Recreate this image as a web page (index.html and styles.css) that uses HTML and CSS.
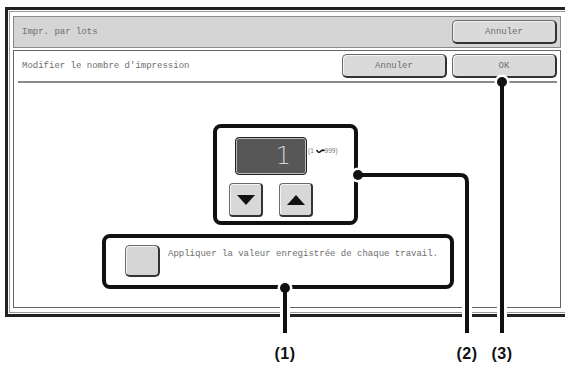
FILE: index.html
```html
<!DOCTYPE html>
<html lang="fr">
<head>
  <meta charset="UTF-8" />
  <meta name="viewport" content="width=device-width, initial-scale=1.0" />
  <title>Impr. par lots</title>
  <link rel="stylesheet" href="styles.css">
</head>
<body>
  <!-- Screen frame -->
  <div class="frame">
    <div class="frame-inner">
      <div class="header">
        <span class="label-text">Impr. par lots</span>
        <button class="btn">Annuler</button>
      </div>

      <div class="panel">
        <div class="panel-head">
          <span class="label-text">Modifier le nombre d'impression</span>
          <div class="actions">
            <button class="btn">Annuler</button>
            <button class="btn">OK</button>
          </div>
        </div>

        <div class="panel-body">
          <!-- Counter (2) -->
          <div class="callout counter">
            <div class="display-row">
              <div class="display">1</div>
              <span class="range">(1 <svg class="wave" width="9" height="5" viewBox="0 0 9 5"><path d="M1 1.5 Q2.5 4.5 4.5 2.5 T8 1.5" fill="none" stroke="#111" stroke-width="1.6" stroke-linecap="round"/></svg>999)</span>
            </div>
            <div class="arrows">
              <button class="arrow">
                <svg width="18" height="10" viewBox="0 0 18 10"><polygon points="0,0 18,0 9,10" fill="#111"/></svg>
              </button>
              <button class="arrow">
                <svg width="18" height="10" viewBox="0 0 18 10"><polygon points="0,10 18,10 9,0" fill="#111"/></svg>
              </button>
            </div>
          </div>

          <!-- Apply stored value (1) -->
          <div class="callout apply">
            <button class="check"></button>
            <span class="label-text">Appliquer la valeur enregistrée de chaque travail.</span>
          </div>
        </div>
      </div>
    </div>
  </div>

  <!-- Leader lines over the screen -->
  <svg class="leaders" width="565" height="365" viewBox="0 0 565 365">
    <g fill="none" stroke="#fff" stroke-width="10">
      <path d="M285 288 V333" />
      <path d="M358 175 H460 Q467 175 467 182 V333" />
      <path d="M502 82 V333" />
    </g>
    <g fill="#fff">
      <circle cx="285" cy="288" r="7.5" />
      <circle cx="358" cy="175" r="7.5" />
      <circle cx="502" cy="82" r="7.5" />
    </g>
    <g fill="none" stroke="#111" stroke-width="4">
      <path d="M285 288 V333" />
      <path d="M358 175 H460 Q467 175 467 182 V333" />
      <path d="M502 82 V333" />
    </g>
    <g fill="#111">
      <circle cx="285" cy="288" r="5" />
      <circle cx="358" cy="175" r="5" />
      <circle cx="502" cy="82" r="5" />
    </g>
  </svg>

  <div class="callout-num n1">(1)</div>
  <div class="callout-num n2">(2)</div>
  <div class="callout-num n3">(3)</div>
</body>
</html>
```

FILE: styles.css
```css
/* Operation panel screen */
html, body {
  margin: 0;
  padding: 0;
  background-color: #fff;
}
body {
  position: relative;
  width: 565px;
  height: 365px;
  overflow: hidden;
  font-family: "Liberation Mono", "DejaVu Sans Mono", monospace;
}
.frame {
  box-sizing: border-box;
  margin: 7px 0 0 5px;
  width: 575px;
  height: 310px;
  border: 3px solid #222;
  padding: 1px;
}
.frame-inner {
  box-sizing: border-box;
  height: 100%;
  border: 1px solid #9a9a9a;
  padding: 4px 0 4px 3px;
}
.label-text {
  font-size: 9px;
  color: #6e6e6e;
  white-space: nowrap;
}
/* Buttons */
.btn {
  box-sizing: border-box;
  width: 105px;
  height: 24px;
  padding: 0;
  background-color: #dadada;
  border-style: solid;
  border-width: 1px 2px 2px 1px;
  border-color: #6a6a6a #333 #333 #6a6a6a;
  border-radius: 5px;
  box-shadow: inset 1px 1px 0 #f4f4f4;
  font-family: "Liberation Mono", monospace;
  font-size: 9px;
  color: #6e6e6e;
}
/* Top title bar */
.header {
  box-sizing: border-box;
  width: 548px;
  height: 32px;
  display: flex;
  align-items: center;
  justify-content: space-between;
  padding: 0 3px 0 8px;
  background-color: #d5d5d5;
  border: 1px solid #8a8a8a;
}
/* Settings panel */
.panel {
  box-sizing: border-box;
  width: 548px;
  height: 258px;
  margin-top: 2px;
  border: 1px solid #666;
  background-color: #fff;
}
.panel-head {
  height: 30px;
  margin: 0 3px 0 4px;
  padding-left: 4px;
  display: flex;
  align-items: center;
  justify-content: space-between;
  border-bottom: 2px solid #8a8a8a;
}
.actions {
  display: flex;
  gap: 5px;
}
.panel-body {
  display: flex;
  flex-direction: column;
  align-items: flex-start;
}
/* Boxes drawn around the described controls */
.callout {
  box-sizing: border-box;
  border: 4px solid #111;
  border-radius: 8px;
}
.counter {
  width: 145px;
  height: 101px;
  margin: 41px 0 0 199px;
}
.display-row {
  display: flex;
  align-items: flex-start;
  margin: 9px 0 0 18px;
}
.display {
  box-sizing: border-box;
  width: 72px;
  height: 38px;
  padding-right: 15px;
  background-color: #575757;
  border: 1px solid #222;
  border-radius: 4px;
  box-shadow: 0 0 0 1px #bbb inset;
  font-family: "DejaVu Sans", "Liberation Sans", sans-serif;
  font-weight: 200;
  font-size: 24px;
  line-height: 36px;
  text-align: right;
  color: #d0d0d0;
}
.range {
  margin: 10px 0 0 1px;
  font-family: "Liberation Sans", sans-serif;
  font-size: 6.5px;
  color: #777;
  white-space: nowrap;
}
.wave {
  vertical-align: middle;
}
.arrows {
  display: flex;
  gap: 16px;
  margin: 8px 0 0 12px;
}
.arrow {
  box-sizing: border-box;
  width: 34px;
  height: 34px;
  padding: 0;
  display: flex;
  align-items: center;
  justify-content: center;
  background-color: #d8d8d8;
  border-style: solid;
  border-width: 1px 2px 2px 1px;
  border-color: #6a6a6a #333 #333 #6a6a6a;
  border-radius: 4px;
  box-shadow: inset 1px 1px 0 #f4f4f4;
}
.apply {
  width: 352px;
  height: 55px;
  margin: 9px 0 0 88px;
  display: flex;
  align-items: flex-start;
  gap: 8px;
  padding: 7px 0 0 19px;
}
.check {
  box-sizing: border-box;
  width: 35px;
  height: 32px;
  padding: 0;
  background-color: #d6d6d6;
  border-style: solid;
  border-width: 1px 2px 2px 1px;
  border-color: #6a6a6a #333 #333 #6a6a6a;
  border-radius: 5px;
  box-shadow: inset 1px 1px 0 #f4f4f4;
}
.apply .label-text {
  margin-top: 4px;
}
/* Leader lines and their numbers */
.leaders {
  position: absolute;
  left: 0;
  top: 0;
  pointer-events: none;
}
.callout-num {
  position: absolute;
  top: 344px;
  width: 40px;
  margin-left: -20px;
  text-align: center;
  font-family: "Liberation Sans", Arial, sans-serif;
  font-weight: bold;
  font-size: 16px;
  line-height: 19px;
  letter-spacing: 0.5px;
  color: #111;
}
.n1 { left: 285px; }
.n2 { left: 467px; }
.n3 { left: 502px; }
```
